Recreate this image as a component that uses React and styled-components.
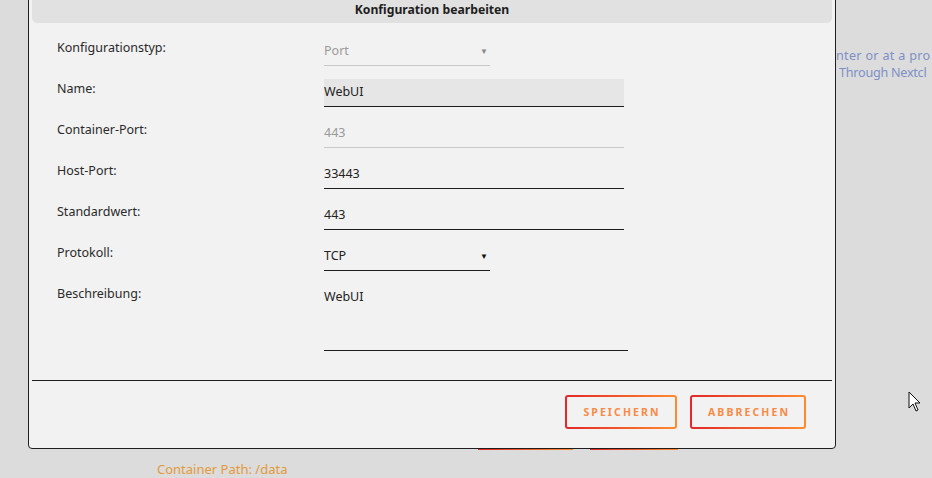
import React from "react";
import styled, { createGlobalStyle } from "styled-components";

const Global = createGlobalStyle`
  html, body { margin: 0; padding: 0; }
  body {
    background: #dcdcdc;
    font-family: "Noto Sans", "Open Sans", sans-serif;
    overflow: hidden;
  }
`;

const Page = styled.div`
  position: relative;
  width: 932px;
  height: 478px;
  overflow: hidden;
  background: #dcdcdc;
  display: flex;
  flex-direction: column;
  padding-top: 47px;
  box-sizing: border-box;
`;

const SideNote = styled.div`
  padding-left: 836px;
  font-size: 12.6px;
  line-height: 17px;
  color: #7d90c6;
  white-space: nowrap;
  letter-spacing: ${(p) => p.$ls}px;
`;

const BgBars = styled.div`
  margin-top: 367px;
  display: flex;
  padding-left: 478px;
  gap: 17px;
`;

const BgBar = styled.div`
  width: ${(p) => p.$w}px;
  height: 2px;
  background: linear-gradient(90deg, #e22828, #ff8c2f);
`;

const PathText = styled.div`
  margin-top: 10px;
  padding-left: 157px;
  font-size: 13px;
  line-height: 18px;
  color: #e39a3a;
`;

const Modal = styled.div`
  position: absolute;
  left: 28px;
  top: -8px;
  width: 808px;
  height: 457px;
  box-sizing: border-box;
  background: #f2f2f2;
  border: 1px solid #1e1e1e;
  border-radius: 4px;
  padding: 3px 3px 0 3px;
  display: flex;
  flex-direction: column;
`;

const TitleBar = styled.div`
  height: 27px;
  background: #e1e1e1;
  border-radius: 5px;
  display: flex;
  align-items: flex-end;
  justify-content: center;
  padding-bottom: 5px;
  box-sizing: border-box;
  font-size: 12.2px;
  font-weight: 700;
  color: #1e1e1e;
`;

const Form = styled.div`
  display: grid;
  grid-template-columns: 267px 1fr;
  row-gap: 13px;
  padding: 15px 0 0 25px;
`;

const Label = styled.div`
  font-size: 12.5px;
  line-height: 18px;
  color: #2a2a2a;
  padding-top: 0.5px;
`;

const Field = styled.div`
  position: relative;
  width: ${(p) => p.$w}px;
  height: ${(p) => p.$h || 28}px;
  box-sizing: border-box;
  background: ${(p) => (p.$filled ? "#e6e6e6" : "transparent")};
  border-bottom: 1px solid ${(p) => (p.$muted ? "#c8c8c8" : "#1e1e1e")};
  display: flex;
  align-items: flex-start;
  justify-content: space-between;
  padding-top: 4px;
  font-size: 12.5px;
  line-height: 18px;
  color: ${(p) => (p.$muted ? "#9a9a9a" : "#222")};
`;

const Arrow = styled.span`
  font-size: 8px;
  line-height: 18px;
  color: ${(p) => (p.$muted ? "#888" : "#111")};
  margin-right: 2px;
`;

const Footer = styled.div`
  margin-top: auto;
  border-top: 1px solid #1e1e1e;
  display: flex;
  justify-content: flex-end;
  gap: 13px;
  padding: 14px 26px 19px 0;
`;

const Button = styled.button`
  width: ${(p) => p.$w}px;
  height: 34px;
  box-sizing: border-box;
  border: 2px solid transparent;
  border-radius: 3px;
  background: linear-gradient(#f2f2f2, #f2f2f2) padding-box,
    linear-gradient(90deg, #e22828, #ff8c2f) border-box;
  font-family: "Noto Sans", sans-serif;
  font-size: 10.5px;
  font-weight: 700;
  letter-spacing: 2.1px;
  color: #f98a44;
  padding: 0 0 0 2px;
  cursor: pointer;
`;

const Cursor = styled.svg`
  position: absolute;
  left: 908px;
  top: 391px;
`;

const rows = [
  { label: "Konfigurationstyp:", value: "Port", w: 166, muted: true, select: true },
  { label: "Name:", value: "WebUI", w: 300, filled: true },
  { label: "Container-Port:", value: "443", w: 300, muted: true },
  { label: "Host-Port:", value: "33443", w: 300 },
  { label: "Standardwert:", value: "443", w: 300 },
  { label: "Protokoll:", value: "TCP", w: 166, select: true },
  { label: "Beschreibung:", value: "WebUI", w: 304, h: 67 },
];

export default function App() {
  return (
    <>
      <Global />
      <Page>
        <SideNote $ls={0.3}>nter or at a pro</SideNote>
        <SideNote $ls={-0.25}>&nbsp;Through Nextcl</SideNote>
        <BgBars>
          <BgBar $w={95} />
          <BgBar $w={88} />
        </BgBars>
        <PathText>Container Path: /data</PathText>

        <Modal>
          <TitleBar>Konfiguration bearbeiten</TitleBar>
          <Form>
            {rows.map((r) => (
              <React.Fragment key={r.label}>
                <Label>{r.label}</Label>
                <Field $w={r.w} $h={r.h} $muted={r.muted} $filled={r.filled}>
                  <span>{r.value}</span>
                  {r.select && <Arrow $muted={r.muted}>▼</Arrow>}
                </Field>
              </React.Fragment>
            ))}
          </Form>
          <Footer>
            <Button $w={112}>SPEICHERN</Button>
            <Button $w={116}>ABBRECHEN</Button>
          </Footer>
        </Modal>

        <Cursor width="14" height="22" viewBox="0 0 14 22">
          <path d="M1 1 L1 17 L5 13 L8 20 L10 19 L7 12 L12 12 Z" fill="#fff" stroke="#111" strokeWidth="1" strokeLinejoin="round" />
        </Cursor>
      </Page>
    </>
  );
}
